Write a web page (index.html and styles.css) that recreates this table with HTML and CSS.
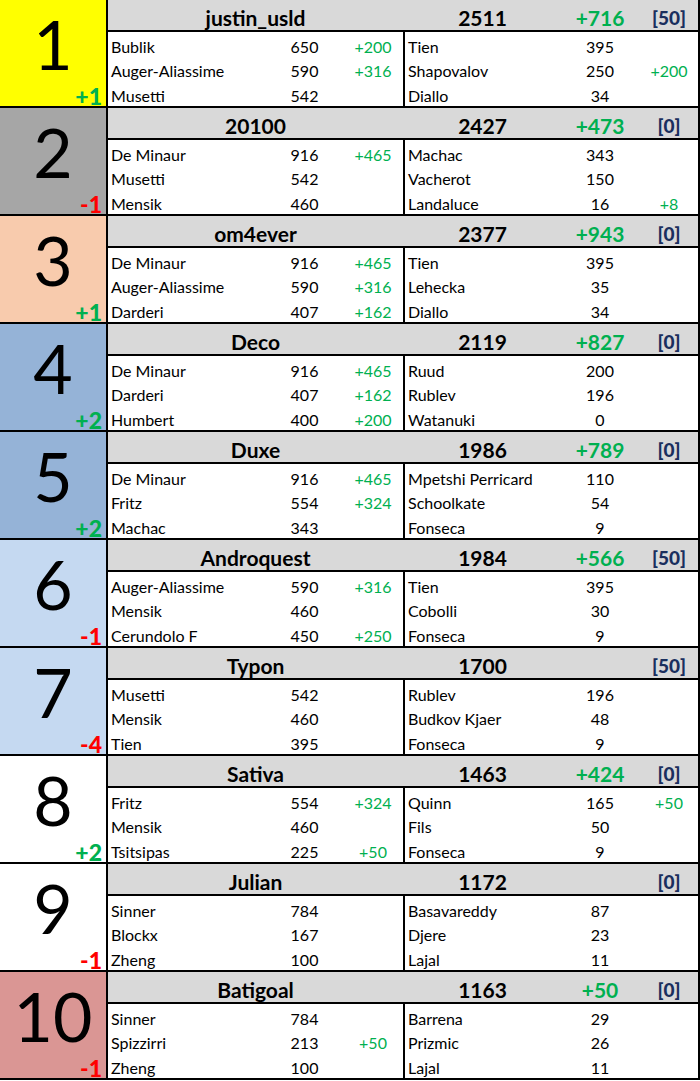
FILE: index.html
```html
<!DOCTYPE html>
<html>
<head>
<meta charset="utf-8">
<link rel="stylesheet" href="styles.css">
</head>
<body>
<div class="board">

  <div class="block">
    <div class="rank r-yellow"><div class="num">1</div><div class="move up">+1</div></div>
    <div class="main">
      <div class="head"><div class="team">justin_usld</div><div class="gap"></div><div class="total">2511</div><div class="delta">+716</div><div class="bonus">[50]</div></div>
      <div class="body">
        <div class="half left">
          <div class="pl">Bublik</div><div class="pt">650</div><div class="bn">+200</div>
          <div class="pl">Auger-Aliassime</div><div class="pt">590</div><div class="bn">+316</div>
          <div class="pl">Musetti</div><div class="pt">542</div><div class="bn"></div>
        </div>
        <div class="half right">
          <div class="pl">Tien</div><div class="pt">395</div><div class="bn"></div>
          <div class="pl">Shapovalov</div><div class="pt">250</div><div class="bn">+200</div>
          <div class="pl">Diallo</div><div class="pt">34</div><div class="bn"></div>
        </div>
      </div>
    </div>
  </div>

  <div class="block">
    <div class="rank r-gray"><div class="num">2</div><div class="move down">-1</div></div>
    <div class="main">
      <div class="head"><div class="team">20100</div><div class="gap"></div><div class="total">2427</div><div class="delta">+473</div><div class="bonus">[0]</div></div>
      <div class="body">
        <div class="half left">
          <div class="pl">De Minaur</div><div class="pt">916</div><div class="bn">+465</div>
          <div class="pl">Musetti</div><div class="pt">542</div><div class="bn"></div>
          <div class="pl">Mensik</div><div class="pt">460</div><div class="bn"></div>
        </div>
        <div class="half right">
          <div class="pl">Machac</div><div class="pt">343</div><div class="bn"></div>
          <div class="pl">Vacherot</div><div class="pt">150</div><div class="bn"></div>
          <div class="pl">Landaluce</div><div class="pt">16</div><div class="bn">+8</div>
        </div>
      </div>
    </div>
  </div>

  <div class="block">
    <div class="rank r-peach"><div class="num">3</div><div class="move up">+1</div></div>
    <div class="main">
      <div class="head"><div class="team">om4ever</div><div class="gap"></div><div class="total">2377</div><div class="delta">+943</div><div class="bonus">[0]</div></div>
      <div class="body">
        <div class="half left">
          <div class="pl">De Minaur</div><div class="pt">916</div><div class="bn">+465</div>
          <div class="pl">Auger-Aliassime</div><div class="pt">590</div><div class="bn">+316</div>
          <div class="pl">Darderi</div><div class="pt">407</div><div class="bn">+162</div>
        </div>
        <div class="half right">
          <div class="pl">Tien</div><div class="pt">395</div><div class="bn"></div>
          <div class="pl">Lehecka</div><div class="pt">35</div><div class="bn"></div>
          <div class="pl">Diallo</div><div class="pt">34</div><div class="bn"></div>
        </div>
      </div>
    </div>
  </div>

  <div class="block">
    <div class="rank r-blue"><div class="num">4</div><div class="move up">+2</div></div>
    <div class="main">
      <div class="head"><div class="team">Deco</div><div class="gap"></div><div class="total">2119</div><div class="delta">+827</div><div class="bonus">[0]</div></div>
      <div class="body">
        <div class="half left">
          <div class="pl">De Minaur</div><div class="pt">916</div><div class="bn">+465</div>
          <div class="pl">Darderi</div><div class="pt">407</div><div class="bn">+162</div>
          <div class="pl">Humbert</div><div class="pt">400</div><div class="bn">+200</div>
        </div>
        <div class="half right">
          <div class="pl">Ruud</div><div class="pt">200</div><div class="bn"></div>
          <div class="pl">Rublev</div><div class="pt">196</div><div class="bn"></div>
          <div class="pl">Watanuki</div><div class="pt">0</div><div class="bn"></div>
        </div>
      </div>
    </div>
  </div>

  <div class="block">
    <div class="rank r-blue"><div class="num">5</div><div class="move up">+2</div></div>
    <div class="main">
      <div class="head"><div class="team">Duxe</div><div class="gap"></div><div class="total">1986</div><div class="delta">+789</div><div class="bonus">[0]</div></div>
      <div class="body">
        <div class="half left">
          <div class="pl">De Minaur</div><div class="pt">916</div><div class="bn">+465</div>
          <div class="pl">Fritz</div><div class="pt">554</div><div class="bn">+324</div>
          <div class="pl">Machac</div><div class="pt">343</div><div class="bn"></div>
        </div>
        <div class="half right">
          <div class="pl">Mpetshi Perricard</div><div class="pt">110</div><div class="bn"></div>
          <div class="pl">Schoolkate</div><div class="pt">54</div><div class="bn"></div>
          <div class="pl">Fonseca</div><div class="pt">9</div><div class="bn"></div>
        </div>
      </div>
    </div>
  </div>

  <div class="block">
    <div class="rank r-light"><div class="num">6</div><div class="move down">-1</div></div>
    <div class="main">
      <div class="head"><div class="team">Androquest</div><div class="gap"></div><div class="total">1984</div><div class="delta">+566</div><div class="bonus">[50]</div></div>
      <div class="body">
        <div class="half left">
          <div class="pl">Auger-Aliassime</div><div class="pt">590</div><div class="bn">+316</div>
          <div class="pl">Mensik</div><div class="pt">460</div><div class="bn"></div>
          <div class="pl">Cerundolo F</div><div class="pt">450</div><div class="bn">+250</div>
        </div>
        <div class="half right">
          <div class="pl">Tien</div><div class="pt">395</div><div class="bn"></div>
          <div class="pl">Cobolli</div><div class="pt">30</div><div class="bn"></div>
          <div class="pl">Fonseca</div><div class="pt">9</div><div class="bn"></div>
        </div>
      </div>
    </div>
  </div>

  <div class="block">
    <div class="rank r-light"><div class="num">7</div><div class="move down">-4</div></div>
    <div class="main">
      <div class="head"><div class="team">Typon</div><div class="gap"></div><div class="total">1700</div><div class="delta"></div><div class="bonus">[50]</div></div>
      <div class="body">
        <div class="half left">
          <div class="pl">Musetti</div><div class="pt">542</div><div class="bn"></div>
          <div class="pl">Mensik</div><div class="pt">460</div><div class="bn"></div>
          <div class="pl">Tien</div><div class="pt">395</div><div class="bn"></div>
        </div>
        <div class="half right">
          <div class="pl">Rublev</div><div class="pt">196</div><div class="bn"></div>
          <div class="pl">Budkov Kjaer</div><div class="pt">48</div><div class="bn"></div>
          <div class="pl">Fonseca</div><div class="pt">9</div><div class="bn"></div>
        </div>
      </div>
    </div>
  </div>

  <div class="block">
    <div class="rank r-white"><div class="num">8</div><div class="move up">+2</div></div>
    <div class="main">
      <div class="head"><div class="team">Sativa</div><div class="gap"></div><div class="total">1463</div><div class="delta">+424</div><div class="bonus">[0]</div></div>
      <div class="body">
        <div class="half left">
          <div class="pl">Fritz</div><div class="pt">554</div><div class="bn">+324</div>
          <div class="pl">Mensik</div><div class="pt">460</div><div class="bn"></div>
          <div class="pl">Tsitsipas</div><div class="pt">225</div><div class="bn">+50</div>
        </div>
        <div class="half right">
          <div class="pl">Quinn</div><div class="pt">165</div><div class="bn">+50</div>
          <div class="pl">Fils</div><div class="pt">50</div><div class="bn"></div>
          <div class="pl">Fonseca</div><div class="pt">9</div><div class="bn"></div>
        </div>
      </div>
    </div>
  </div>

  <div class="block">
    <div class="rank r-white"><div class="num">9</div><div class="move down">-1</div></div>
    <div class="main">
      <div class="head"><div class="team">Julian</div><div class="gap"></div><div class="total">1172</div><div class="delta"></div><div class="bonus">[0]</div></div>
      <div class="body">
        <div class="half left">
          <div class="pl">Sinner</div><div class="pt">784</div><div class="bn"></div>
          <div class="pl">Blockx</div><div class="pt">167</div><div class="bn"></div>
          <div class="pl">Zheng</div><div class="pt">100</div><div class="bn"></div>
        </div>
        <div class="half right">
          <div class="pl">Basavareddy</div><div class="pt">87</div><div class="bn"></div>
          <div class="pl">Djere</div><div class="pt">23</div><div class="bn"></div>
          <div class="pl">Lajal</div><div class="pt">11</div><div class="bn"></div>
        </div>
      </div>
    </div>
  </div>

  <div class="block">
    <div class="rank r-pink"><div class="num">10</div><div class="move down">-1</div></div>
    <div class="main">
      <div class="head"><div class="team">Batigoal</div><div class="gap"></div><div class="total">1163</div><div class="delta">+50</div><div class="bonus">[0]</div></div>
      <div class="body">
        <div class="half left">
          <div class="pl">Sinner</div><div class="pt">784</div><div class="bn"></div>
          <div class="pl">Spizzirri</div><div class="pt">213</div><div class="bn">+50</div>
          <div class="pl">Zheng</div><div class="pt">100</div><div class="bn"></div>
        </div>
        <div class="half right">
          <div class="pl">Barrena</div><div class="pt">29</div><div class="bn"></div>
          <div class="pl">Prizmic</div><div class="pt">26</div><div class="bn"></div>
          <div class="pl">Lajal</div><div class="pt">11</div><div class="bn"></div>
        </div>
      </div>
    </div>
  </div>

</div>
</body>
</html>
```

FILE: styles.css
```css
html, body {
  margin: 0;
  padding: 0;
  background: #ffffff;
}
body {
  font-family: Lato, "Open Sans", sans-serif;
  color: #000;
}
.board {
  width: 700px;
  display: flex;
  flex-direction: column;
}
.block {
  display: flex;
  height: 108px;
  box-sizing: border-box;
  border-bottom: 2px solid #000;
}
.rank {
  width: 108px;
  flex: none;
  box-sizing: border-box;
  border-right: 2px solid #000;
  display: flex;
  flex-direction: column;
}
.r-yellow { background: #ffff00; }
.r-gray { background: #a6a6a6; }
.r-peach { background: #f8cbad; }
.r-blue { background: #95b3d7; }
.r-light { background: #c5d9f1; }
.r-white { background: #ffffff; }
.r-pink { background: #da9694; }
.num {
  padding-top: 14px;
  font-size: 68px;
  line-height: 60px;
  text-align: center;
}
.move {
  margin-top: auto;
  font-weight: 900;
  font-size: 23px;
  line-height: 19px;
  text-align: right;
  padding-right: 4px;
}
.up { color: #00b050; }
.down { color: #ff0000; }
.main {
  flex: 1;
  box-sizing: border-box;
  border-right: 2px solid #000;
  display: flex;
  flex-direction: column;
}
.head {
  height: 32px;
  flex: none;
  box-sizing: border-box;
  background: #d9d9d9;
  border-bottom: 2px solid #000;
  display: grid;
  grid-template-columns: 295px 2px 155px 80px 58px;
  align-items: end;
  font-weight: 700;
  font-size: 21px;
  line-height: 25px;
  text-align: center;
}
.delta { color: #00b050; }
.bonus { color: #1a2f5e; font-size: 19px; font-weight: 900; }
.body {
  flex: 1;
  display: flex;
}
.half {
  display: grid;
  grid-template-rows: repeat(3, 1fr);
  align-items: end;
  font-size: 16px;
  line-height: 19px;
}
.left {
  width: 297px;
  box-sizing: border-box;
  border-right: 2px solid #000;
  grid-template-columns: 158px 77px 60px;
}
.right {
  flex: 1;
  grid-template-columns: 155px 80px 58px;
}
.half > div {
  padding-bottom: 1px;
  white-space: nowrap;
}
.pl { padding-left: 3px; }
.pt { text-align: center; }
.bn { text-align: center; color: #00b050; }
```
